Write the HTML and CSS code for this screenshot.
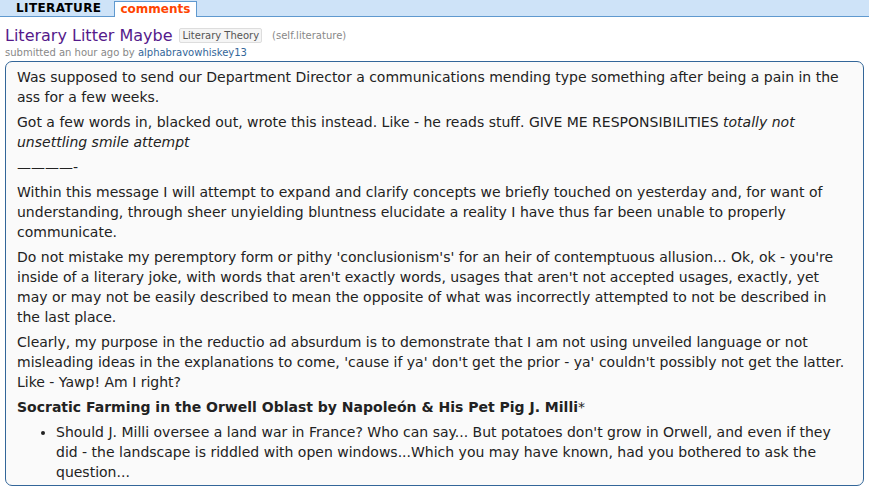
FILE: index.html
```html
<!DOCTYPE html>
<html>
<head>
<meta charset="utf-8">
<link rel="stylesheet" href="styles.css">
</head>
<body>
<div class="header">
  <span class="srname">LITERATURE</span>
  <span class="tab">comments</span>
</div>
<div class="post">
  <div class="titlerow">
    <span class="title">Literary Litter Maybe</span>
    <span class="flair">Literary Theory</span>
    <span class="domain">(self.literature)</span>
  </div>
  <div class="tagline">submitted an hour ago by <span class="author">alphabravowhiskey13</span></div>
  <div class="usertext">
    <p>Was supposed to send our Department Director a communications mending type something after being a pain in the ass for a few weeks.</p>
    <p>Got a few words in, blacked out, wrote this instead. Like - he reads stuff. GIVE ME RESPONSIBILITIES <em>totally not unsettling smile attempt</em></p>
    <p>————-</p>
    <p>Within this message I will attempt to expand and clarify concepts we briefly touched on yesterday and, for want of understanding, through sheer unyielding bluntness elucidate a reality I have thus far been unable to properly communicate.</p>
    <p>Do not mistake my peremptory form or pithy 'conclusionism's' for an heir of contemptuous allusion... Ok, ok - you're inside of a literary joke, with words that aren't exactly words, usages that aren't not accepted usages, exactly, yet may or may not be easily described to mean the opposite of what was incorrectly attempted to not be described in the last place.</p>
    <p>Clearly, my purpose in the reductio ad absurdum is to demonstrate that I am not using unveiled language or not misleading ideas in the explanations to come, 'cause if ya' don't get the prior - ya' couldn't possibly not get the latter. Like - Yawp! Am I right?</p>
    <p><strong>Socratic Farming in the Orwell Oblast by Napoleón &amp; His Pet Pig J. Milli</strong>*</p>
    <ul>
      <li>Should J. Milli oversee a land war in France? Who can say... But potatoes don't grow in Orwell, and even if they did - the landscape is riddled with open windows...Which you may have known, had you bothered to ask the question...</li>
    </ul>
  </div>
</div>
</body>
</html>
```
FILE: styles.css
```css
html, body {
  margin: 0;
  padding: 0;
  background: #ffffff;
  font-family: "DejaVu Sans", Verdana, sans-serif;
  color: #222;
}
.header {
  display: flex;
  align-items: flex-end;
  height: 16px;
  background: #cee3f8;
  border-bottom: 1px solid #5f99cf;
}
.srname {
  font-weight: bold;
  font-size: 12px;
  letter-spacing: 0.4px;
  color: #000;
  padding: 0 13px 0 16px;
  line-height: 15px;
}
.tab {
  font-weight: bold;
  font-size: 12px;
  color: #ff4500;
  background: #fff;
  border: 1px solid #5f99cf;
  border-bottom: none;
  padding: 0 6px 0 5px;
  line-height: 15px;
  margin-bottom: -1px;
  height: 16px;
  box-sizing: border-box;
}
.post {
  padding: 0 5px;
}
.titlerow {
  display: flex;
  align-items: center;
  margin-top: 8px;
  height: 20px;
}
.title {
  font-size: 16px;
  color: #551a8b;
  margin-right: 7px;
}
.flair {
  font-size: 10px;
  color: #545454;
  background: #f5f5f5;
  border: 1px solid #dddddd;
  border-radius: 2px;
  padding: 0 2px;
  line-height: 13px;
  margin-right: 10px;
}
.domain {
  font-size: 10px;
  color: #888;
}
.tagline {
  font-size: 10px;
  color: #888;
  line-height: 12px;
  margin-top: 2px;
}
.author {
  color: #369;
}
.usertext {
  margin-top: 2px;
  background: #fafafa;
  border: 1px solid #369;
  border-radius: 7px;
  padding: 5px 12px 3px 11px;
  font-size: 14px;
  line-height: 20px;
  color: #222;
}
.usertext p {
  margin: 0 0 5px 0;
}
.usertext ul {
  margin: 0;
  padding-left: 39px;
}
.usertext li {
  margin: 0;
}
```
